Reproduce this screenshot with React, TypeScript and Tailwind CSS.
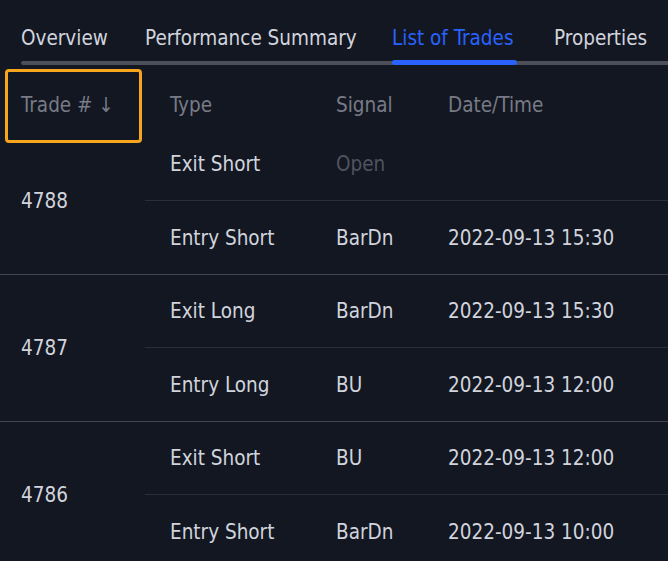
import React from "react"

const TABS = ["Overview", "Performance Summary", "List of Trades", "Properties"]

type Leg = { type: string; signal: string; time: string; open?: boolean }
type Trade = { id: number; legs: Leg[] }

const TRADES: Trade[] = [
  {
    id: 4788,
    legs: [
      { type: "Exit Short", signal: "Open", time: "", open: true },
      { type: "Entry Short", signal: "BarDn", time: "2022-09-13 15:30" },
    ],
  },
  {
    id: 4787,
    legs: [
      { type: "Exit Long", signal: "BarDn", time: "2022-09-13 15:30" },
      { type: "Entry Long", signal: "BU", time: "2022-09-13 12:00" },
    ],
  },
  {
    id: 4786,
    legs: [
      { type: "Exit Short", signal: "BU", time: "2022-09-13 12:00" },
      { type: "Entry Short", signal: "BarDn", time: "2022-09-13 10:00" },
    ],
  },
]

export default function App() {
  return (
    <div
      className="relative h-[561px] w-[668px] overflow-hidden bg-[#131722] text-[20.5px] leading-[28px] text-[#d1d4dc]"
      style={{ fontFamily: '"DejaVu Sans Condensed", "DejaVu Sans", sans-serif' }}
    >
      {/* tabs */}
      <div className="flex pl-[21px] pt-[24px] whitespace-nowrap">
        <div className="w-[124px]">{TABS[0]}</div>
        <div className="w-[247px]">{TABS[1]}</div>
        <div className="w-[162px] text-[#2962ff]">{TABS[2]}</div>
        <div>{TABS[3]}</div>
      </div>
      <div className="relative ml-[21px] mt-[9px] h-[4px] rounded-l-full bg-[#4c4f59]">
        <div className="absolute left-[371px] top-[-1px] h-[5px] w-[125px] rounded-full bg-[#2962ff]" />
      </div>

      {/* header */}
      <div className="flex h-[63px] pt-[26px] text-[#787b86]">
        <div className="w-[170px] pl-[21px]">Trade # ↓</div>
        <div className="w-[166px]">Type</div>
        <div className="w-[112px]">Signal</div>
        <div>Date/Time</div>
      </div>

      {/* orange annotation */}
      <div className="absolute left-[5px] top-[69px] h-[74px] w-[137px] rounded-[4px] border-[3px] border-[#f7a51c]" />

      {TRADES.map((tr) => (
        <div key={tr.id} className="flex border-b border-[#434651]">
          <div className="flex w-[145px] items-center pl-[21px]">{tr.id}</div>
          <div className="flex-1">
            {tr.legs.map((l, i) => (
              <div
                key={i}
                className={`flex h-[73px] items-center ${i === 0 ? "border-b border-[#2a2e39]" : ""}`}
              >
                <div className="w-[191px] pl-[25px]">{l.type}</div>
                <div className={`w-[112px] ${l.open ? "text-[#50535e]" : ""}`}>{l.signal}</div>
                <div>{l.time}</div>
              </div>
            ))}
          </div>
        </div>
      ))}
    </div>
  )
}
